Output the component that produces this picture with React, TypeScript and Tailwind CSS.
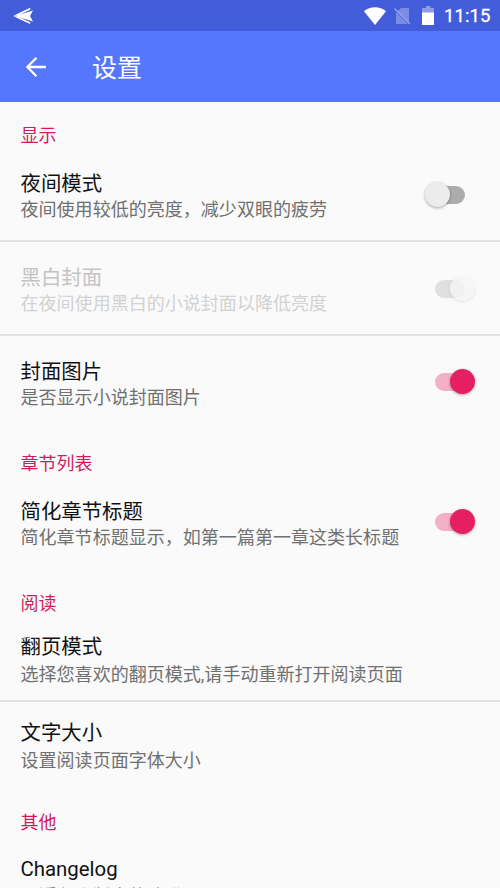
import React, { useState } from 'react';

interface SettingItem {
  id: string;
  title: string;
  summary: string;
  checked?: boolean;
  disabled?: boolean;
  divider?: boolean;
}

interface SettingSection {
  label: string;
  items: SettingItem[];
}

const SECTIONS: SettingSection[] = [
  {
    label: '显示',
    items: [
      { id: 'night', title: '夜间模式', summary: '夜间使用较低的亮度，减少双眼的疲劳', checked: false, divider: true },
      { id: 'gray', title: '黑白封面', summary: '在夜间使用黑白的小说封面以降低亮度', checked: true, disabled: true, divider: true },
      { id: 'cover', title: '封面图片', summary: '是否显示小说封面图片', checked: true },
    ],
  },
  {
    label: '章节列表',
    items: [
      { id: 'chapter', title: '简化章节标题', summary: '简化章节标题显示，如第一篇第一章这类长标题', checked: true },
    ],
  },
  {
    label: '阅读',
    items: [
      { id: 'flip', title: '翻页模式', summary: '选择您喜欢的翻页模式,请手动重新打开阅读页面', divider: true },
      { id: 'font', title: '文字大小', summary: '设置阅读页面字体大小' },
    ],
  },
  {
    label: '其他',
    items: [{ id: 'changelog', title: 'Changelog', summary: '最近七个版本的改进' }],
  },
];

const StatusBar: React.FC = () => (
  <div className="flex h-[31px] shrink-0 items-center bg-[#435cd9] pl-[13px] pr-[10px] text-white">
    <svg className="h-[18px] w-[21px]" viewBox="0 0 21 18" fill="currentColor">
      <path d="M0 9 17 .8l.5 1.600L5 8.500z" />
      <path d="M0 9l17 8 .5-1.600L5 9.500z" />
      <path d="M2 9 20 3.500 17 9l3 5.500z" />
    </svg>
    <div className="ml-auto flex items-center">
      <svg className="h-[18px] w-[22px]" viewBox="0 0 22 18" fill="currentColor">
        <path d="M11 18 0 4.200C3 1.700 6.800 .2 11 .2s8 1.500 11 4z" />
      </svg>
      <svg className="ml-[8px] h-[18px] w-[17px]" viewBox="0 0 17 18">
        <path d="M7 1h8v16H2V6z" fill="#7b8ce4" />
        <path d="M1 3.200l15 15" stroke="#435cd9" strokeWidth="1.200" />
        <path d="M.5 1.500 16 17" stroke="#95a3ea" strokeWidth="1.400" />
      </svg>
      <svg className="ml-[11px] h-[19px] w-[12px]" viewBox="0 0 12 19">
        <path d="M4 0h4.500v2H12v5H0V2h4z" fill="#8e9ce8" />
        <path d="M0 6.500h12V19H0z" fill="#fff" />
      </svg>
      <span className="ml-[10px] w-[46px] whitespace-nowrap pt-[2px] text-[18.500px] leading-none tracking-[0.100px] [-webkit-text-stroke:0.300px_white]">11:15</span>
    </div>
  </div>
);

const Toolbar: React.FC = () => (
  <header className="flex h-[71px] shrink-0 items-center bg-[#5577fd] pl-[26px] text-white">
    <svg className="h-5 w-5" viewBox="0 0 20 20" fill="none" stroke="currentColor" strokeWidth="2.300">
      <path d="M20 10H1.500M10.500 .800 1.300 10l9.200 9.200" />
    </svg>
    <h1 className="ml-[46px] pt-[3px] text-[25px] leading-none">设置</h1>
  </header>
);

interface SwitchProps {
  checked: boolean;
  disabled?: boolean;
  onToggle: () => void;
}

const Switch: React.FC<SwitchProps> = ({ checked, disabled, onToggle }) => {
  const track = disabled ? 'bg-[#e0e0e0]' : checked ? 'bg-[#f4b0c8]' : 'bg-[#acacac]';
  const thumb = disabled
    ? 'bg-[#f5f5f5]/80 shadow-[0_1px_3px_rgba(0,0,0,0.100)]'
    : checked
      ? 'bg-[#e61e62] shadow-[0_1px_3px_rgba(0,0,0,0.350)]'
      : 'bg-[#ececec] shadow-[0_1px_3px_rgba(0,0,0,0.350)]';

  return (
    <button
      type="button"
      role="switch"
      aria-checked={checked}
      disabled={disabled}
      onClick={onToggle}
      className="relative mb-px h-[18px] w-[30px] shrink-0"
    >
      <span className={`block h-full w-full rounded-full ${track}`} />
      <span className={`absolute -top-[4px] h-[25px] w-[25px] rounded-full ${thumb} ${checked ? 'left-[15px]' : '-left-[10px]'}`} />
    </button>
  );
};

export default function App() {
  const [values, setValues] = useState<Record<string, boolean>>({});

  const toggle = (id: string, current: boolean) => {
    setValues((prev) => ({ ...prev, [id]: !current }));
  };

  return (
    <div className="flex h-[888px] w-[500px] flex-col overflow-hidden bg-[#fafafa] font-[Roboto,'Noto_Sans_CJK_SC',sans-serif]">
      <StatusBar />
      <Toolbar />

      <main className="min-h-0 flex-1 overflow-hidden">
        {SECTIONS.map((section, index) => (
          <section key={section.label}>
            <h2 className={`flex h-[46.500px] items-end pl-[20.500px] text-[18px] leading-[22px] text-[#d01c5e] ${index === 0 ? 'pb-[2px]' : 'pb-px'}`}>
              {section.label}
            </h2>
            {section.items.map((item) => {
              const hasSwitch = item.checked !== undefined;
              const checked = values[item.id] ?? item.checked ?? false;
              return (
                <div
                  key={item.id}
                  className={`flex items-center justify-between pl-[20.500px] pr-[35px] ${hasSwitch ? 'h-[93.700px]' : 'h-[86px]'} ${item.divider ? 'border-b-2 border-[#e0e0e0] pt-[2px]' : ''}`}
                >
                  <div className={`whitespace-nowrap ${hasSwitch ? 'pt-[4px]' : item.divider ? 'pt-[3px]' : 'pt-[2px]'}`}>
                    <div className={`text-[20.400px] ${hasSwitch ? 'leading-[26px]' : 'leading-[29px]'} ${item.disabled ? 'text-[#c3c3c3]' : 'text-[#111111]'} ${item.id === 'changelog' ? 'pt-[8px]' : ''}`}>
                      {item.title}
                    </div>
                    <div className={`text-[18.050px] leading-[26px] ${item.disabled ? 'text-[#d2d2d2]' : 'text-[#707070]'}`}>
                      {item.summary}
                    </div>
                  </div>
                  {hasSwitch && (
                    <Switch checked={checked} disabled={item.disabled} onToggle={() => toggle(item.id, checked)} />
                  )}
                </div>
              );
            })}
          </section>
        ))}
      </main>
    </div>
  );
}
